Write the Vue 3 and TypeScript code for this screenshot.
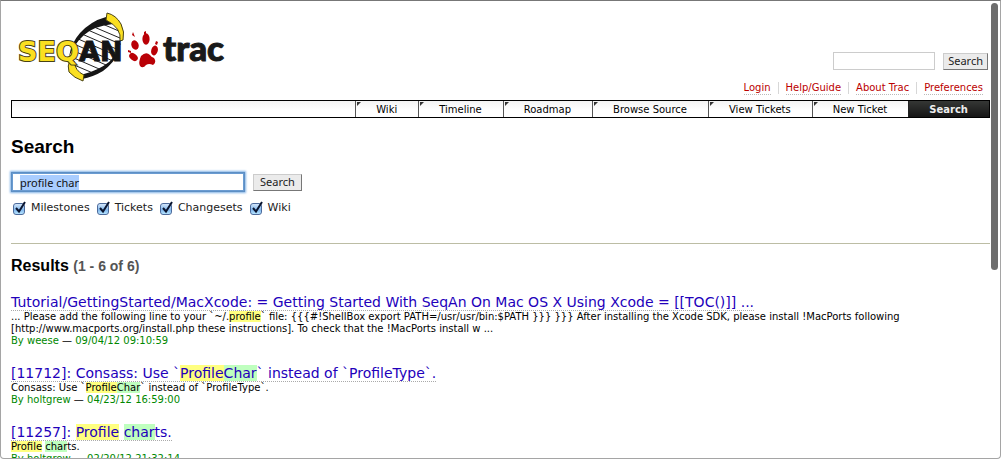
<script setup lang="ts">
import { onMounted, ref } from 'vue'

interface Part { text: string; hit?: number }
interface Result { title: Part[]; body: Part[]; author: string; date: string }

const meta = ['Login', 'Help/Guide', 'About Trac', 'Preferences']
const nav = ['Wiki', 'Timeline', 'Roadmap', 'Browse Source', 'View Tickets', 'New Ticket', 'Search']
const filters = ref([
  { name: 'Milestones', on: true },
  { name: 'Tickets', on: true },
  { name: 'Changesets', on: true },
  { name: 'Wiki', on: true },
])
const results: Result[] = [
  {
    title: [{ text: 'Tutorial/GettingStarted/MacXcode: = Getting Started With SeqAn On Mac OS X Using Xcode = [[TOC()]] ...' }],
    body: [
      { text: '... Please add the following line to your `~/.' },
      { text: 'profile', hit: 0 },
      { text: '` file: {{{#!ShellBox export PATH=/usr/usr/bin:$PATH }}} }}} After installing the Xcode SDK, please install !MacPorts following [http://www.macports.org/install.php these instructions]. To check that the !MacPorts install w ...' },
    ],
    author: 'weese',
    date: '09/04/12 09:10:59',
  },
  {
    title: [
      { text: '[11712]: Consass: Use `' }, { text: 'Profile', hit: 0 }, { text: 'Char', hit: 1 },
      { text: '` instead of `ProfileType`.' },
    ],
    body: [
      { text: 'Consass: Use `' }, { text: 'Profile', hit: 0 }, { text: 'Char', hit: 1 },
      { text: '` instead of `ProfileType`.' },
    ],
    author: 'holtgrew',
    date: '04/23/12 16:59:00',
  },
  {
    title: [{ text: '[11257]: ' }, { text: 'Profile', hit: 0 }, { text: ' ' }, { text: 'char', hit: 1 }, { text: 'ts.' }],
    body: [{ text: 'Profile', hit: 0 }, { text: ' ' }, { text: 'char', hit: 1 }, { text: 'ts.' }],
    author: 'holtgrew',
    date: '02/20/12 21:32:14',
  },
]

const query = ref('profile char')
const quick = ref('')
const queryBox = ref<HTMLInputElement | null>(null)
onMounted(() => {
  queryBox.value?.focus()
  queryBox.value?.select()
})
</script>

<template>
  <div class="window">
    <div class="page">
      <header class="banner">
        <a href="#" class="logo" aria-label="SeqAn trac">
          <svg width="220" height="76" viewBox="10 8 220 76">
            <defs>
              <clipPath id="helix"><path d="M68 68Q67 52 77 38Q88 24 106 20Q119 25 121 40Q117 58 105 67Q93 76 80 76Q70 74 68 68Z" /></clipPath>
            </defs>
            <g clip-path="url(#helix)">
              <path d="M60 10h70v70h-70z" fill="#fff" />
              <path d="M92 20l40 17M86 24l40 17M80 27l46 20M74 31l46 20M68 35l46 20M66 41l46 20M66 48l46 20M66 55l46 20M66 62l40 17" stroke="#222" stroke-width="1" fill="none" />
            </g>
            <path d="M68 57Q70 43 79 33Q90 21 105 17L112 24Q93 26 83 35Q73 44 68 57Z" fill="#151515" />
            <path d="M77 77L83 74Q98 70 108 62L119 50Q113 63 102 71Q92 77 81 79Z" fill="#151515" />
            <g fill="#fadf20" stroke="#494315" stroke-width="1">
              <path d="M106 13Q115 15 120 24Q124 32 122 40L119 41Q121 28 105 20Z" />
              <path d="M69 60Q66 66 68 72Q73 78 82 81L83 75Q74 71 73 61Z" />
            </g>
            <text x="17" y="61" class="seq">SEQ</text>
            <text x="78" y="61" class="an">AN</text>
            <g fill="#b90006">
              <ellipse cx="134" cy="45" rx="3.6" ry="4.8" transform="rotate(-20 134 45)" />
              <ellipse cx="145" cy="39" rx="3.6" ry="5.8" />
              <ellipse cx="153.500" cy="50.500" rx="3.3" ry="5" transform="rotate(15 153.500 50.500)" />
              <ellipse cx="132.500" cy="57" rx="4.8" ry="3.3" transform="rotate(40 132.500 57)" />
              <path d="M140 56Q145 51 149 55Q150 57 153 58Q156 62 152 65Q148 63 145 65Q142 69 139 66Q137 63 140 56Z" />
              <path d="M132 32l2 5-3-2zM143 32l2-1 0 4-2-1zM155 41l2 1-1 3-2-1zM127 50l3 1 0 2-3-1z" />
            </g>
            <text x="162" y="61" class="trac">trac</text>
          </svg>
        </a>
        <form class="quick" @submit.prevent>
          <input v-model="quick" type="text" aria-label="Quick search">
          <button type="submit">Search</button>
        </form>
      </header>
      <ul class="meta">
        <li v-for="m in meta" :key="m"><a href="#">{{ m }}</a></li>
      </ul>
      <nav>
        <ul class="mainnav">
          <li v-for="n in nav" :key="n" :class="{ active: n === 'Search' }"><a href="#">{{ n }}</a></li>
        </ul>
      </nav>
      <main>
        <h1>Search</h1>
        <form @submit.prevent>
          <div class="row">
            <input ref="queryBox" v-model="query" type="text" aria-label="Search terms">
            <button type="submit">Search</button>
          </div>
          <div class="filters">
            <label v-for="f in filters" :key="f.name">
              <span class="check">
                <input v-model="f.on" type="checkbox">
                <svg v-if="f.on" width="14" height="14" viewBox="0 0 14 14"><path d="M3 7L6 10.500L12 1" /></svg>
              </span>
              {{ f.name }}
            </label>
          </div>
        </form>
        <hr>
        <h2>Results <span>(1 - 6 of 6)</span></h2>
        <dl>
          <template v-for="(r, i) in results" :key="i">
            <dt><a href="#"><span v-for="(p, j) in r.title" :key="j" :class="p.hit === undefined ? '' : 'hit' + p.hit">{{ p.text }}</span></a></dt>
            <dd>
              <p><span v-for="(p, j) in r.body" :key="j" :class="p.hit === undefined ? '' : 'hit' + p.hit">{{ p.text }}</span></p>
              <p><span class="by">By {{ r.author }}</span> — <span class="by">{{ r.date }}</span></p>
            </dd>
          </template>
        </dl>
      </main>
    </div>
    <div class="scrollbar" aria-hidden="true"></div>
  </div>
</template>

<style>
body { margin: 0; }
</style>

<style scoped>
* { box-sizing: border-box; }
ul, dl, dd, p, h1, h2 { margin: 0; padding: 0; }
ul { list-style: none; }
a { text-decoration: none; }
.window {
  position: relative;
  height: 100vh;
  overflow: hidden;
  border: 1px solid #a5a5a5;
  border-top-color: #777;
  border-radius: 0 0 4px 4px;
  background: #fff;
  color: #000;
  font: 10px/12px "DejaVu Sans", Verdana, sans-serif;
}
.page { padding: 7px 10px 0; }
.scrollbar {
  position: absolute;
  top: 2px;
  right: 2px;
  width: 7px;
  height: 267px;
  border-radius: 4px;
  background: #6d6d6d;
}
.banner { display: flex; justify-content: space-between; align-items: flex-end; height: 74px; }
.logo { align-self: flex-start; height: 76px; }
.logo svg { display: block; }
.seq, .an { font: bold 27px "DejaVu Sans", sans-serif; }
.seq { fill: #fadf20; stroke: #494315; stroke-width: 2px; paint-order: stroke; }
.an { fill: #151515; stroke: #151515; stroke-width: 1px; }
.trac { font: 900 35px Lato, sans-serif; fill: #1a1a1a; stroke: #1a1a1a; stroke-width: 1px; }
.quick { display: flex; align-items: center; gap: 8px; padding: 0 2px 12px 0; }
.quick input { width: 102px; height: 18px; border: 1px solid #ccc; padding: 0 4px; }
button {
  height: 17px;
  padding: 0 4px;
  border: 1px solid #ccc;
  border-right-color: #777;
  border-bottom-color: #777;
  background: #ebebeb;
  color: #222;
  font: 11px/14px "Noto Sans", sans-serif;
}
.meta { display: flex; justify-content: flex-end; height: 18px; }
.meta li { height: 12px; padding: 0 7px; }
.meta li + li { border-left: 1px solid #d7d7d7; }
.meta a { display: block; border-bottom: 1px dotted #bbb; color: #b00; }
.mainnav {
  display: flex;
  justify-content: flex-end;
  height: 18px;
  border: 1px solid #000;
  background: linear-gradient(#f3f3f3, #fff 60%);
  line-height: 18px;
}
.mainnav li {
  position: relative;
  height: 16px;
  padding: 0 21px 0 20px;
  border-left: 1px solid #555;
}
.mainnav li:not(.active)::before {
  content: "";
  position: absolute;
  left: 1px;
  top: 1px;
  border: 2px solid transparent;
  border-top-color: #333;
  border-left-color: #333;
}
.mainnav a { display: block; color: #000; }
.mainnav .active { background: linear-gradient(#353735, #151515); border-color: #222; }
.mainnav .active a { color: #eee; font-weight: bold; }
h1 { padding: 18px 0 14px; font: bold 19px/22px "Liberation Sans", Arial, sans-serif; }
.row { display: flex; align-items: center; gap: 8px; }
.row button { padding: 0 6px; }
.row input {
  width: 234px;
  height: 20px;
  padding: 0 8px;
  border: 1px solid #5d8fc4;
  outline: 1px solid #6a9bd1;
  outline-offset: -2px;
  box-shadow: 0 0 2px 1px #83b3e6;
  font: 11px/14px "Noto Sans", sans-serif;
  color: #111;
}
.row input::selection { background: #a9cdff; color: #111; }
.filters { display: flex; gap: 7px; padding: 8px 0 0 2px; font-size: 11px; line-height: 16px; color: #222; }
.filters label { display: flex; gap: 6px; }
.check { position: relative; width: 12px; height: 12px; margin-top: 3px; }
.check input {
  appearance: none;
  display: block;
  width: 12px;
  height: 12px;
  margin: 0;
  border: 1px solid #4d6b9c;
  border-radius: 3px;
  background: linear-gradient(#d2e5fa, #82b8ed 60%, #b7e5ff);
}
.check svg { position: absolute; left: 0; top: -2px; pointer-events: none; }
.check path { fill: none; stroke: #0a1530; stroke-width: 2px; }
hr { height: 1px; margin: 27px 0 13px; border: 0; background: #bcbda4; }
h2 { padding-bottom: 20px; font: bold 16px/18px "Liberation Sans", Arial, sans-serif; }
h2 span { color: #555; font-size: 14px; }
dt { height: 16px; font-size: 14px; line-height: 15px; white-space: nowrap; }
dt a { display: inline-block; height: 16px; border-bottom: 1px dotted #aaa; color: #20b; white-space: pre; }
dd { margin-bottom: 19px; }
.by { color: #080; }
.hit0 { background: #ffff80; }
.hit1 { background: #bfffbf; }
</style>
